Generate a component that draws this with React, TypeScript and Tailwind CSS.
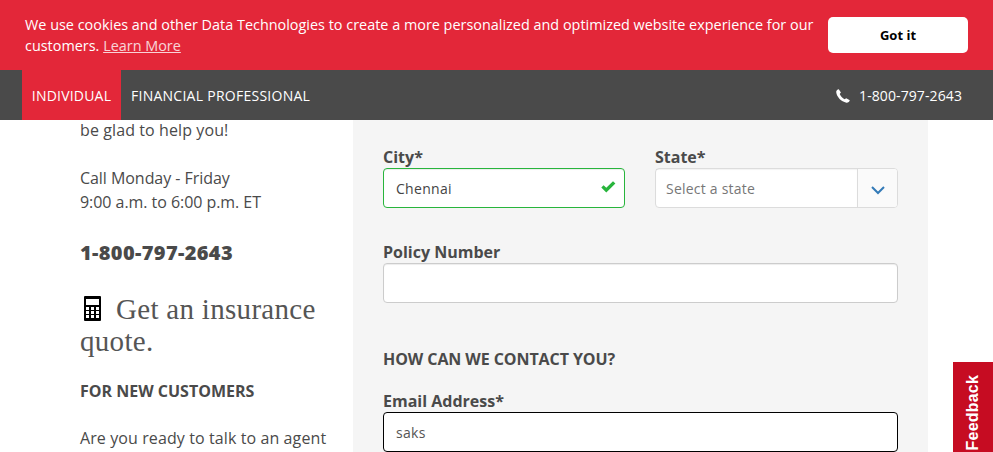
import type { ReactNode } from "react";

function Label({ children }: { children: ReactNode }) {
  return (
    <label className="block h-[22px] text-base leading-[22px] font-bold whitespace-nowrap">
      {children}
    </label>
  );
}

function CookieBanner() {
  return (
    <div className="flex h-[70px] shrink-0 items-start justify-between bg-[#e32739] pr-[25px] pl-[25px] text-white">
      <p className="mt-[14px] w-[795px] text-[14.4px] leading-[21.6px] tracking-[0.01px]">
        <span className="whitespace-nowrap">
          We use cookies and other Data Technologies to create a more personalized and optimized website experience for our
        </span>
        <br />
        <span className="relative -top-px">
          customers. <a className="underline opacity-80">Learn More</a>
        </span>
      </p>
      <button className="mt-[17px] h-9 w-[140px] shrink-0 rounded-[5px] bg-white pt-[2px] text-[13px] font-bold text-black">
        Got it
      </button>
    </div>
  );
}

function NavBar() {
  return (
    <nav className="flex h-[50px] shrink-0 items-stretch bg-[#4a4a4a] pr-[31px] pl-[22px] text-sm leading-[20px] text-white">
      <a className="flex w-[99px] items-center justify-center bg-[#e32739] pt-[2px] tracking-[0.2px]">INDIVIDUAL</a>
      <a className="flex items-center pt-[2px] pl-[10px] tracking-[0.26px]">FINANCIAL PROFESSIONAL</a>
      <div className="ml-auto flex items-center gap-[9px] pt-[2px]">
        <svg width="14" height="14" viewBox="0 0 14 14" fill="white">
          <path d="M2.8.3 4.9 3.4 3.7 5.1C4.6 7.2 6.4 9.2 8.6 10.3L10.2 9.2 13.8 11.3C13.4 12.9 12.2 13.8 10.4 13.7 5.2 12.8.8 8.2.2 3.1.2 1.7 1.3.5 2.8.3Z" />
        </svg>
        <span className="tracking-[0.1px]">1-800-797-2643</span>
      </div>
    </nav>
  );
}

function Calculator() {
  return (
    <svg className="mr-[15px] ml-[4px] inline-block align-[-2px]" width="17" height="25" viewBox="0 0 17 25">
      <rect width="17" height="25" rx="1" fill="#000" />
      <path
        fill="#fff"
        d="M2 3h13v6H2zM2 11h3v3H2zM7 11h3v3H7zM12 11h3v3h-3zM2 15h3v3H2zM7 15h3v3H7zM12 15h3v3h-3zM2 19h3v3H2zM7 19h3v3H7zM12 19h3v3h-3z"
      />
    </svg>
  );
}

function Sidebar() {
  return (
    <aside className="ml-[80px] w-[273px] shrink-0 text-base leading-6 whitespace-nowrap">
      <p className="-mt-[2px] tracking-[0.1px]">be glad to help you!</p>
      <p className="mt-6 tracking-[-0.05px]">
        Call Monday - Friday
        <br />
        9:00 a.m. to 6:00 p.m. ET
      </p>
      <p className="mt-[25px] text-xl leading-7 font-extrabold tracking-[0.36px]">1-800-797-2643</p>
      <h2 className="mt-[26px] h-16 font-['Liberation_Serif',serif] text-[29px] leading-8 tracking-[0.3px] text-[#555]">
        <Calculator />
        Get an insurance
        <br />
        quote.
      </h2>
      <h4 className="mt-[22px] font-bold">FOR NEW CUSTOMERS</h4>
      <p className="mt-[23px] tracking-[0.1px]">Are you ready to talk to an agent</p>
    </aside>
  );
}

function ContactForm() {
  return (
    <form className="w-[575px] shrink-0 bg-[#f5f5f5] px-[30px] pt-[26px]">
      <div className="flex gap-[30px]">
        <div className="w-[242px]">
          <Label>City*</Label>
          <div className="flex h-10 items-center justify-between rounded-[4px] border border-[#28b53c] bg-white pr-[8px] pl-3 text-sm tracking-[0.3px] text-[#444] shadow-[inset_0_1px_1px_rgba(0,0,0,0.075)]">
            <span className="pt-px">Chennai</span>
            <svg className="-mt-[3px]" width="15" height="12" viewBox="0 0 15 12" fill="#28b53c">
              <path d="M.3 6.5 2.6 4.2 5.3 6.7 12 .3 14.4 2.4 5.3 11.6Z" />
            </svg>
          </div>
        </div>
        <div className="w-[243px]">
          <Label>State*</Label>
          <div className="flex h-10 rounded-[4px] border border-[#dcdcdc] bg-white text-sm text-[#777]">
            <span className="flex flex-1 items-center pt-px pl-[10px] tracking-[0.22px] shadow-[inset_0_1px_1px_rgba(0,0,0,0.05)]">
              Select a state
            </span>
            <span className="flex w-10 items-center justify-center rounded-r-[3px] border-l border-[#dcdcdc] bg-[#fafafa] pt-[4px]">
              <svg width="14" height="9" viewBox="0 0 14 9" fill="none" stroke="#337ab7" strokeWidth="2">
                <path d="m1 1 6 6 6-6" />
              </svg>
            </span>
          </div>
        </div>
      </div>
      <div className="mt-[33px]">
        <Label>Policy Number</Label>
        <div className="h-10 rounded-[4px] border border-[#ccc] bg-white shadow-[inset_0_1px_1px_rgba(0,0,0,0.075)]" />
      </div>
      <h4 className="mt-[44px] text-base leading-6 font-bold tracking-[-0.08px]">HOW CAN WE CONTACT YOU?</h4>
      <div className="mt-[19px]">
        <Label>Email Address*</Label>
        <div className="flex h-10 items-center rounded-[4px] border border-black bg-white px-3 pt-px text-sm tracking-[0.3px] text-[#555]">
          saks
        </div>
      </div>
    </form>
  );
}

export default function App() {
  return (
    <div className="relative flex h-[452px] w-[993px] flex-col overflow-hidden bg-white font-['Open_Sans',sans-serif] text-[#4a4a4a]">
      <CookieBanner />
      <NavBar />
      <main className="flex min-h-0 flex-1 overflow-hidden">
        <Sidebar />
        <ContactForm />
      </main>
      <button className="absolute top-[362px] right-0 flex h-[102px] w-10 items-center justify-center bg-[#c60c22]">
        <span className="rotate-180 font-['Liberation_Sans',sans-serif] text-base font-bold tracking-[0.2px] text-white [writing-mode:vertical-rl]">
          Feedback
        </span>
      </button>
    </div>
  );
}
